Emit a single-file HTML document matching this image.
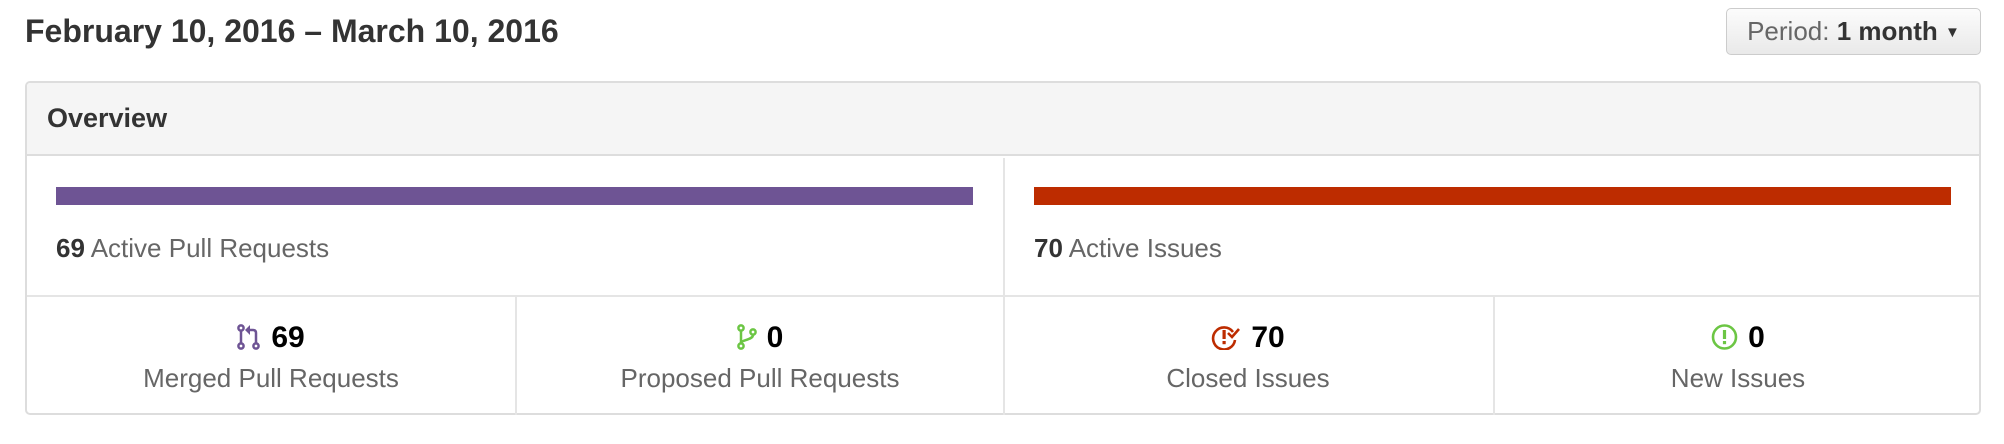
<!DOCTYPE html>
<html><head><meta charset="utf-8"><style>
*{margin:0;padding:0;box-sizing:border-box}
body{width:2004px;height:444px;background:#fff;font-family:"Liberation Sans",Arial,sans-serif;position:relative;overflow:hidden;color:#333}
.abs{position:absolute}
.title{left:25px;top:13px;font-size:32px;font-weight:bold;color:#333}
.btn{left:1726px;top:8px;width:255px;height:47px;border:1px solid #ccc;border-radius:5px;background:linear-gradient(#fcfcfc,#e9e9e9);font-size:26px;line-height:45px;text-align:center;color:#666}
.btn b{color:#333}
.card{left:25px;top:81px;width:1956px;height:334px;border:2px solid #ddd;border-radius:5px}
.hdr{left:0;top:0;width:1952px;height:73px;background:#f5f5f5;border-bottom:2px solid #ddd;border-radius:4px 4px 0 0}
.hdr span{position:absolute;left:20px;top:20px;font-size:27px;font-weight:bold;color:#333}
.bar{height:18px;top:104px}
.lbl{font-size:26px;color:#666;top:150px}
.lbl b{color:#333}
.num{font-size:30px;font-weight:bold;color:#000;top:238px;width:488px;text-align:center}
.num svg{vertical-align:-3px;margin-right:10px}
.sub{font-size:26px;color:#666;top:280px;width:488px;text-align:center}
</style></head><body>
<div class="abs title">February 10, 2016 – March 10, 2016</div>
<div class="abs btn">Period: <b>1 month</b> <span style="font-size:15px;color:#333;position:relative;top:-3px">&#9660;</span></div>
<div class="abs card">
 <div class="abs hdr"><span>Overview</span></div>
 <div class="abs" style="left:976px;top:75px;width:2px;height:257px;background:#e5e5e5"></div>
 <div class="abs" style="left:0;top:212px;width:1952px;height:2px;background:#e5e5e5"></div>
 <div class="abs" style="left:488px;top:214px;width:2px;height:118px;background:#e5e5e5"></div>
 <div class="abs" style="left:1466px;top:214px;width:2px;height:118px;background:#e5e5e5"></div>
 <div class="abs bar" style="left:29px;width:917px;background:#6e5494"></div>
 <div class="abs bar" style="left:1007px;width:917px;background:#bd2c00"></div>
 <div class="abs lbl" style="left:29px"><b>69</b> Active Pull Requests</div>
 <div class="abs lbl" style="left:1007px"><b>70</b> Active Issues</div>

 <div class="abs num" style="left:0"><svg width="24" height="26" viewBox="0 0 24 26"><g fill="none" stroke="#6e5494" stroke-width="2.5"><circle cx="4" cy="4" r="2.6"/><circle cx="4" cy="22" r="2.6"/><circle cx="19" cy="22" r="2.6"/><line x1="4" y1="7" x2="4" y2="19"/><path d="M19 19V9c0-2-1-3-3-3h-4"/></g><path d="M13 1v10l-5-5z" fill="#6e5494"/></svg>69</div>
 <div class="abs sub" style="left:0">Merged Pull Requests</div>

 <div class="abs num" style="left:489px"><svg width="20" height="26" viewBox="0 0 20 26"><g fill="none" stroke="#6cc644" stroke-width="2.5"><circle cx="4" cy="4" r="2.6"/><circle cx="4" cy="22" r="2.6"/><circle cx="16" cy="8" r="2.6"/><line x1="4" y1="7" x2="4" y2="19"/><path d="M16 11c0 5-12 5-12 8"/></g></svg>0</div>
 <div class="abs sub" style="left:489px">Proposed Pull Requests</div>

 <div class="abs num" style="left:977px"><svg width="30" height="26" viewBox="0 0 30 26"><path d="M22 8A11 11 0 1 0 24 16" fill="none" stroke="#bd2c00" stroke-width="2.6"/><rect x="11.5" y="6" width="3.2" height="9" fill="#bd2c00"/><rect x="11.5" y="17" width="3.2" height="3.2" fill="#bd2c00"/><path d="M17 9l4 4 7-8" fill="none" stroke="#bd2c00" stroke-width="2.6"/></svg>70</div>
 <div class="abs sub" style="left:977px">Closed Issues</div>

 <div class="abs num" style="left:1467px"><svg width="27" height="26" viewBox="0 0 27 26"><circle cx="13.5" cy="13" r="11.5" fill="none" stroke="#6cc644" stroke-width="2.6"/><rect x="11.9" y="6" width="3.2" height="9" fill="#6cc644"/><rect x="11.9" y="17" width="3.2" height="3.2" fill="#6cc644"/></svg>0</div>
 <div class="abs sub" style="left:1467px">New Issues</div>
</div>
</body></html>
